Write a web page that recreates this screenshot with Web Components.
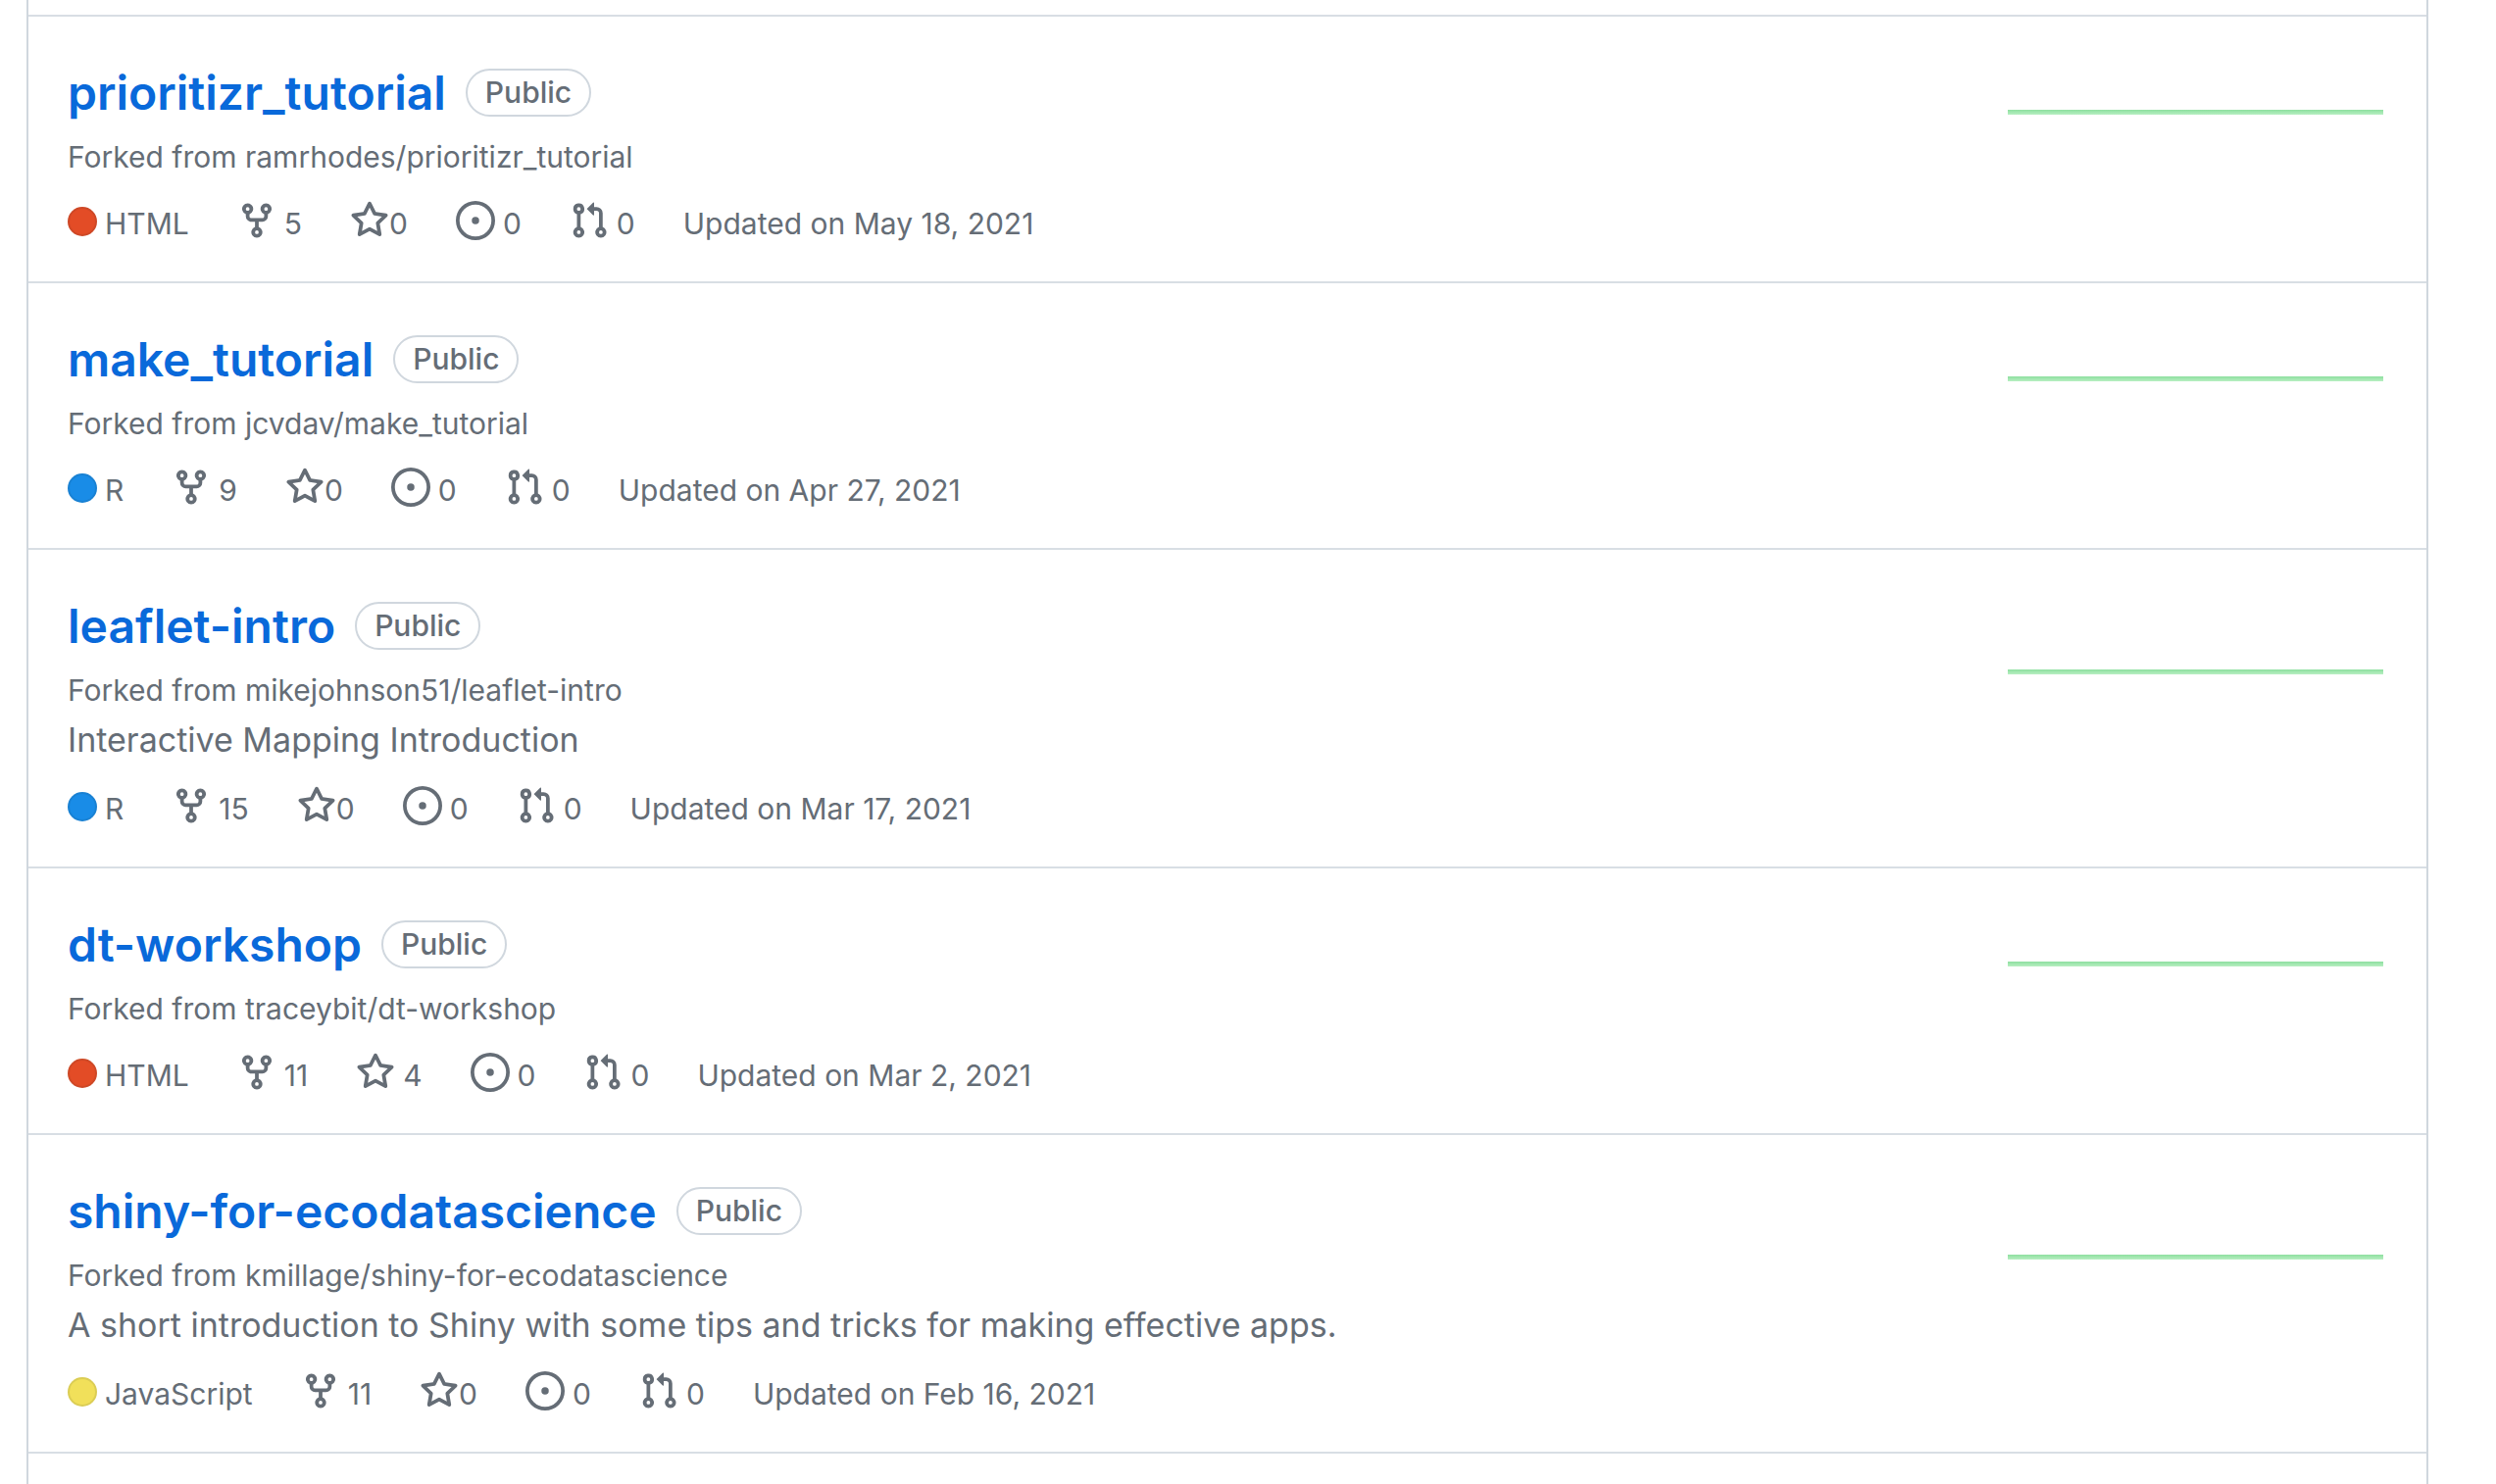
<!DOCTYPE html>
<html lang="en">
<head>
<meta charset="utf-8">
<title>Repositories</title>
<style>
  body { margin: 0; background: #fff; color: #656d76; font-family: Inter, "Noto Sans", sans-serif; }
</style>
</head>
<body>
<repo-list>
  <repo-item name="prioritizr_tutorial" source="ramrhodes/prioritizr_tutorial" lang="HTML" color="#e34c26" forks="5" stars="0" issues="0" pulls="0" updated="May 18, 2021"></repo-item>
  <repo-item name="make_tutorial" source="jcvdav/make_tutorial" lang="R" color="#198ce7" forks="9" stars="0" issues="0" pulls="0" updated="Apr 27, 2021"></repo-item>
  <repo-item name="leaflet-intro" source="mikejohnson51/leaflet-intro" lang="R" color="#198ce7" forks="15" stars="0" issues="0" pulls="0" updated="Mar 17, 2021">Interactive Mapping Introduction</repo-item>
  <repo-item name="dt-workshop" source="traceybit/dt-workshop" lang="HTML" color="#e34c26" forks="11" stars="4" issues="0" pulls="0" updated="Mar 2, 2021"></repo-item>
  <repo-item name="shiny-for-ecodatascience" source="kmillage/shiny-for-ecodatascience" lang="JavaScript" color="#f1e05a" forks="11" stars="0" issues="0" pulls="0" updated="Feb 16, 2021">A short introduction to Shiny with some tips and tricks for making effective apps.</repo-item>
</repo-list>
<script>
const ICONS = {
  fork: 'M5 5.372v.878c0 .414.336.75.75.75h4.5a.75.75 0 0 0 .75-.75v-.878a2.25 2.25 0 1 1 1.5 0v.878a2.25 2.25 0 0 1-2.25 2.25h-1.5v2.128a2.251 2.251 0 1 1-1.5 0V8.5h-1.5A2.25 2.25 0 0 1 3.5 6.25v-.878a2.25 2.25 0 1 1 1.5 0ZM5 3.25a.75.75 0 1 0-1.5 0 .75.75 0 0 0 1.5 0Zm6.75.75a.75.75 0 1 0 0-1.5.75.75 0 0 0 0 1.5Zm-3 8.75a.75.75 0 1 0-1.5 0 .75.75 0 0 0 1.5 0Z',
  star: 'M8 .25a.75.75 0 0 1 .673.418l1.882 3.815 4.21.612a.75.75 0 0 1 .416 1.279l-3.046 2.97.719 4.192a.751.751 0 0 1-1.088.791L8 12.347l-3.766 1.98a.75.75 0 0 1-1.088-.79l.72-4.194L.818 6.374a.75.75 0 0 1 .416-1.28l4.21-.611L7.327.668A.75.75 0 0 1 8 .25Zm0 2.445L6.615 5.5a.75.75 0 0 1-.564.41l-3.097.45 2.24 2.184a.75.75 0 0 1 .216.664l-.528 3.084 2.769-1.456a.75.75 0 0 1 .698 0l2.77 1.456-.53-3.084a.75.75 0 0 1 .216-.664l2.24-2.183-3.096-.45a.75.75 0 0 1-.564-.41L8 2.694Z',
  issue: 'M8 9.5a1.5 1.5 0 1 0 0-3 1.5 1.5 0 0 0 0 3ZM8 0a8 8 0 1 1 0 16A8 8 0 0 1 8 0ZM1.5 8a6.5 6.5 0 1 0 13 0 6.5 6.5 0 0 0-13 0Z',
  pull: 'M1.5 3.25a2.25 2.25 0 1 1 3 2.122v5.256a2.251 2.251 0 1 1-1.5 0V5.372A2.25 2.25 0 0 1 1.5 3.25Zm5.677-.177L9.573.677A.25.25 0 0 1 10 .854V2.5h1A2.5 2.5 0 0 1 13.5 5v5.628a2.251 2.251 0 1 1-1.5 0V5a1 1 0 0 0-1-1h-1v1.646a.25.25 0 0 1-.427.177L7.177 3.427a.25.25 0 0 1 0-.354ZM3.75 2.5a.75.75 0 1 0 0 1.5.75.75 0 0 0 0-1.5Zm0 9.5a.75.75 0 1 0 0 1.5.75.75 0 0 0 0-1.5Zm8.25.75a.75.75 0 1 0 1.5 0 .75.75 0 0 0-1.5 0Z'
};

class RepoList extends HTMLElement {
  constructor() {
    super();
    this.attachShadow({ mode: 'open' }).innerHTML = `
      <style>
        :host { display: block; box-sizing: border-box; min-height: 100vh; margin: 0 69px 0 27px; padding-top: 15px;
                border: 2px solid #d0d7de; border-width: 0 2px; }
        .list { border-bottom: 2px solid #d8dee4; }
      </style>
      <div class="list" role="list"><slot></slot></div>`;
  }
}

class RepoBadge extends HTMLElement {
  constructor() {
    super();
    this.attachShadow({ mode: 'open' }).innerHTML = `
      <style>
        :host { display: inline-block; box-sizing: border-box; padding: 0 18px; border: 2px solid #d0d7de; border-radius: 25px;
                font-size: 30px; line-height: 45px; font-weight: 500; }
      </style>
      <slot></slot>`;
  }
}

class RepoStat extends HTMLElement {
  connectedCallback() {
    if (this.shadowRoot) return;
    this.attachShadow({ mode: 'open' }).innerHTML = `
      <style>
        :host { display: block; }
        a { display: flex; align-items: flex-start; gap: 8px; color: inherit; text-decoration: none; }
        :host([tight]) a { gap: 0; }
        svg { width: 40px; height: 40px; fill: currentColor; }
      </style>
      <a href="#${this.getAttribute('icon')}"><svg viewBox="0 0 16 16" aria-hidden="true"><path fill-rule="evenodd" d="${ICONS[this.getAttribute('icon')]}"/></svg><span><slot></slot></span></a>`;
  }
}

class RepoSparkline extends HTMLElement {
  constructor() {
    super();
    this.attachShadow({ mode: 'open' }).innerHTML = `
      <style>
        :host { display: block; flex: none; }
        svg { display: block; width: 387px; height: 80px; }
      </style>
      <svg viewBox="0 0 387 80" role="img" aria-label="Past year of activity">
        <defs><linearGradient id="g" x1="0" y1="0" x2="0" y2="1"><stop offset="0" stop-color="#8ddf9f"/><stop offset="1" stop-color="#b8efc2"/></linearGradient></defs>
        <rect width="383" height="5" fill="url(#g)"/>
      </svg>`;
  }
}

class RepoItem extends HTMLElement {
  connectedCallback() {
    if (this.shadowRoot) return;
    const a = n => this.getAttribute(n);
    const described = this.textContent.trim() !== '';
    const starTight = a('stars') === '0' ? 'tight' : '';
    this.setAttribute('role', 'listitem');
    this.attachShadow({ mode: 'open' }).innerHTML = `
      <style>
        :host { display: flex; align-items: center; justify-content: space-between; border-top: 2px solid #d8dee4; padding-right: 40px; }
        .main { padding: 40px 0 36px 40px; }
        .head { display: flex; align-items: center; gap: 20px; }
        h3 { margin: 0; font-size: 48px; line-height: 75px; font-weight: 600; }
        a { color: #0969da; text-decoration: none; }
        p { margin: 0; }
        .source { margin-top: 5px; font-size: 30px; line-height: 47px; }
        .source a { color: inherit; }
        .desc { font-size: 34px; line-height: 53px; }
        .meta { display: flex; align-items: flex-start; gap: 49px; margin-top: 21px; font-size: 30px; line-height: 46px; }
        .lang { display: flex; gap: 8px; }
        .dot { box-sizing: border-box; width: 30px; height: 30px; margin-top: 6px; border: 2px solid rgba(31,35,40,.1); border-radius: 50%; background: ${a('color')} border-box; }
      </style>
      <div class="main">
        <div class="head"><h3><a href="#${a('name')}">${a('name')}</a></h3><repo-badge>Public</repo-badge></div>
        <p class="source">Forked from <a href="#${a('source')}">${a('source')}</a></p>
        ${described ? '<p class="desc"><slot></slot></p>' : ''}
        <div class="meta">
          <span class="lang"><span class="dot"></span><span>${a('lang')}</span></span>
          <repo-stat icon="fork">${a('forks')}</repo-stat>
          <repo-stat icon="star" ${starTight}>${a('stars')}</repo-stat>
          <repo-stat icon="issue">${a('issues')}</repo-stat>
          <repo-stat icon="pull">${a('pulls')}</repo-stat>
          <span>Updated on ${a('updated')}</span>
        </div>
      </div>
      <repo-sparkline></repo-sparkline>`;
  }
}

customElements.define('repo-badge', RepoBadge);
customElements.define('repo-stat', RepoStat);
customElements.define('repo-sparkline', RepoSparkline);
customElements.define('repo-item', RepoItem);
customElements.define('repo-list', RepoList);
</script>
</body>
</html>
